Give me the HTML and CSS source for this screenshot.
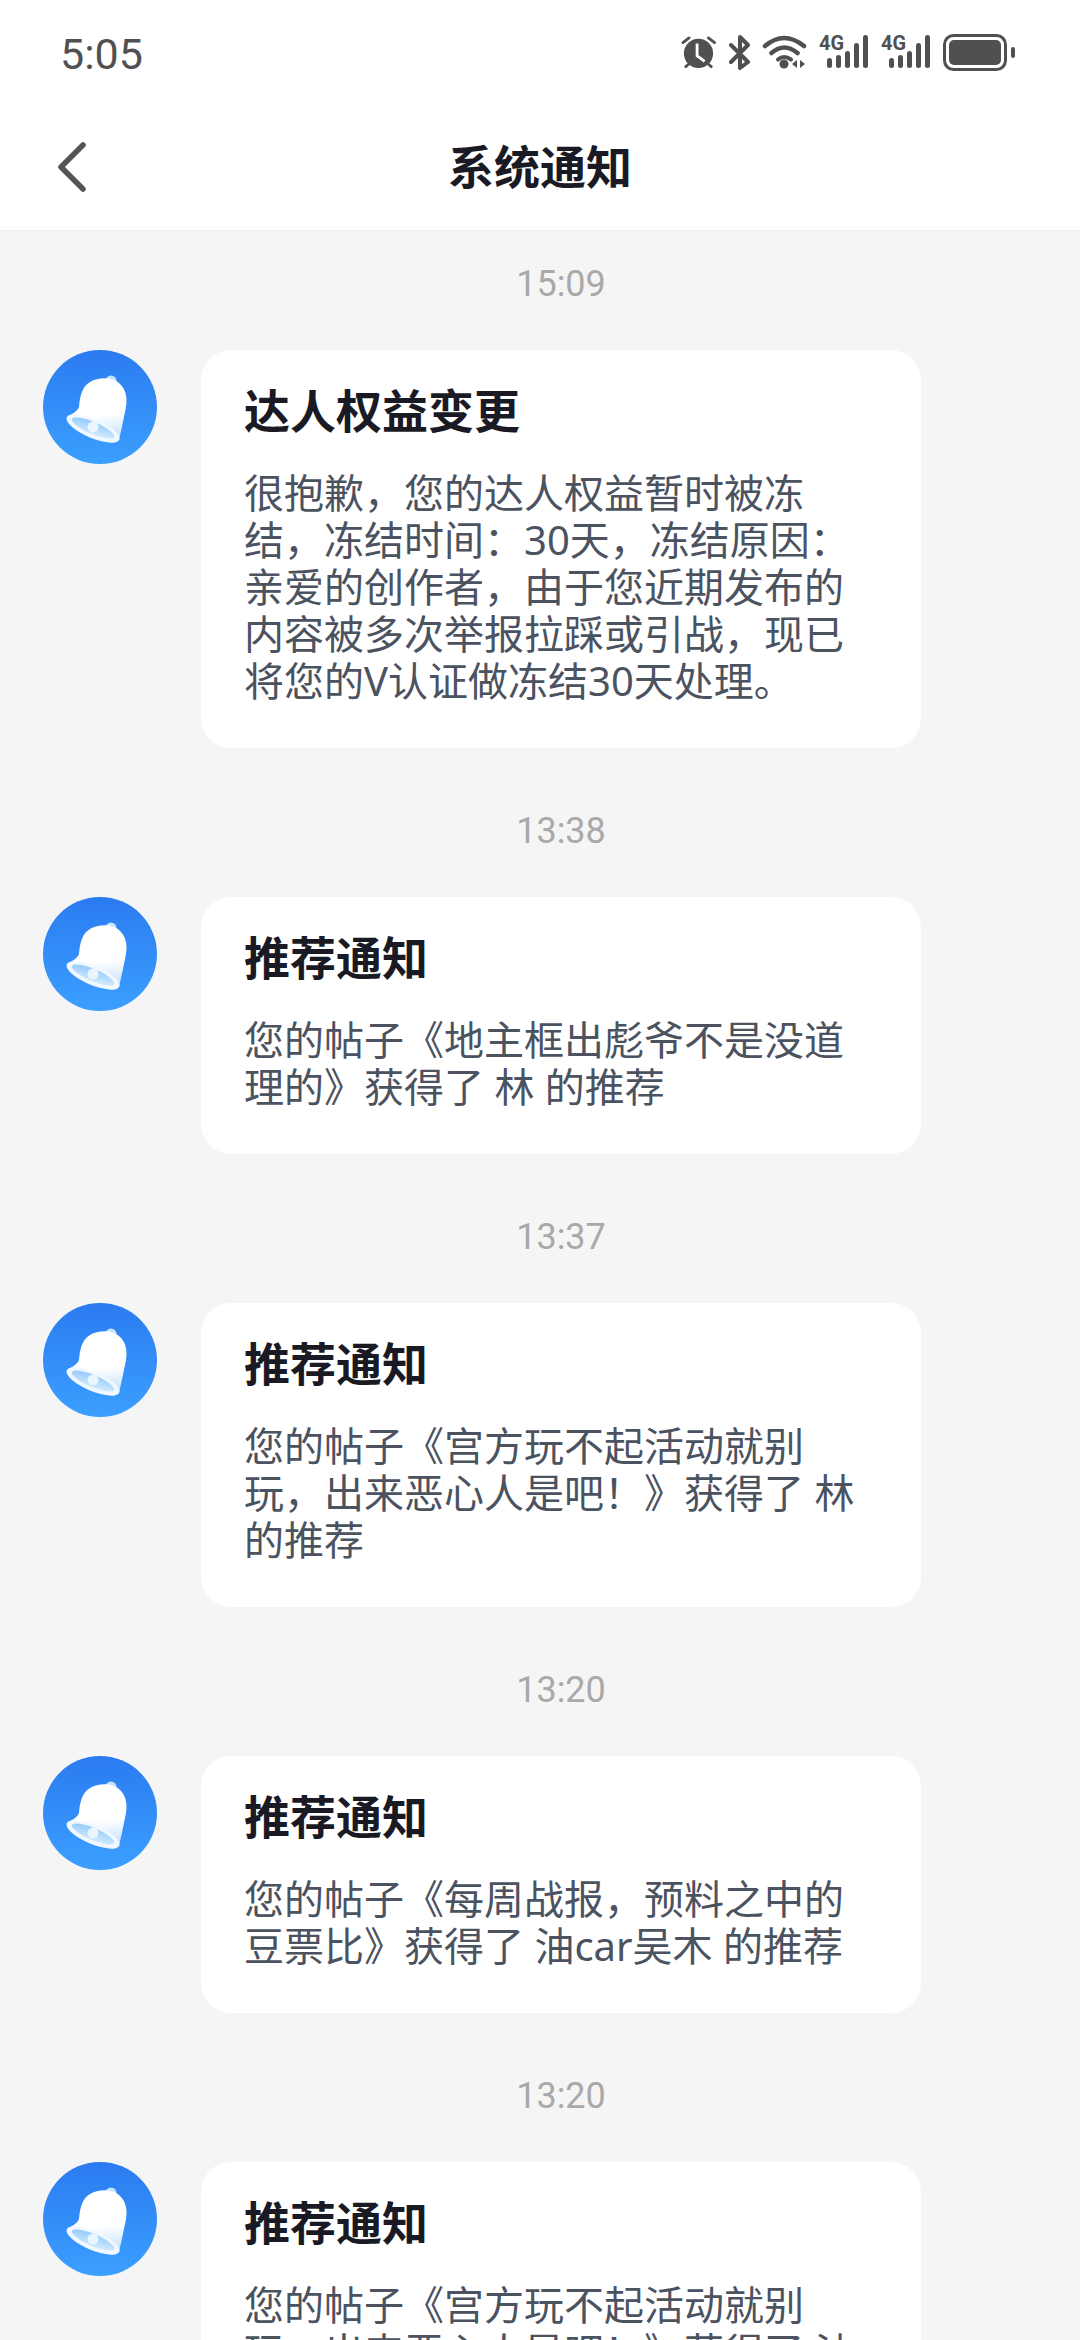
FILE: index.html
```html
<!DOCTYPE html>
<html lang="zh-CN">

<head>
    <meta charset="UTF-8">
    <meta name="viewport" content="width=device-width, initial-scale=1.0">
    <title>系统通知</title>
    <link rel="stylesheet" href="styles.css">
</head>

<body>
    <svg class="defs" width="0" height="0">
        <defs>
            <linearGradient id="bellBody" x1="0.45" y1="0" x2="0.55" y2="1">
                <stop offset="0.6" stop-color="#ffffff" />
                <stop offset="1" stop-color="#c4e0fc" />
            </linearGradient>
            <linearGradient id="bellMouth" x1="0.2" y1="0" x2="0.8" y2="1">
                <stop offset="0" stop-color="#8fc8fa" />
                <stop offset="1" stop-color="#d8ecfe" />
            </linearGradient>
            <symbol id="bell" viewBox="0 0 114 114">
                <circle cx="68" cy="31" r="5.500" fill="#c6e2fb" />
                <path d="M36 57C37 44 40 36 47 32C56 27 69 27 76 33C84 40 85 50 82 62C80 72 78 81 76 90L24 67C29 64 34 62 36 57Z" fill="url(#bellBody)" />
                <ellipse cx="50" cy="78.500" rx="28.500" ry="9.500" transform="rotate(23 50 78.500)" fill="#f1f8ff" />
                <ellipse cx="50" cy="78" rx="23" ry="6" transform="rotate(23 50 78)" fill="url(#bellMouth)" />
                <circle cx="50" cy="77" r="5.500" fill="#eaf5ff" />
            </symbol>
            <symbol id="signal" viewBox="0 0 50 36">
                <text x="0" y="16" class="net-label" textLength="25" lengthAdjust="spacingAndGlyphs">4G</text>
                <rect x="8" y="24" width="5" height="10" rx="2.500" />
                <rect x="17" y="21" width="5" height="13" rx="2.500" />
                <rect x="26" y="17" width="5" height="17" rx="2.500" />
                <rect x="35" y="9" width="5" height="25" rx="2.500" />
                <rect x="44" y="1" width="5" height="33" rx="2.500" />
            </symbol>
        </defs>
    </svg>

    <div class="status-bar">
        <span class="clock">5:05</span>
        <div class="status-icons">
            <svg class="ic-alarm" viewBox="0 0 37 35">
                <circle cx="18.500" cy="18.500" r="15.500" fill="#505050" />
                <path d="M17 8V21L25 27" fill="none" stroke="#fff" stroke-width="3" />
                <path d="M2 7L8.500 2M29 2L35.500 7M5 32.500L8 30M29 30L32 32.500" fill="none" stroke="#505050" stroke-width="3" stroke-linecap="round" />
            </svg>
            <svg class="ic-bt" viewBox="0 0 22 35">
                <path d="M3 10L20 27L12 33V2L20 10L3 27" fill="none" stroke="#505050" stroke-width="4" stroke-linejoin="round" stroke-linecap="round" />
            </svg>
            <svg class="ic-wifi" viewBox="0 0 45 36">
                <path d="M3 12Q22 -4 42 12M9.500 19Q22 8 35.500 19" fill="none" stroke="#505050" stroke-width="4.500" stroke-linecap="round" />
                <path d="M16 25.500Q22 20.500 29 25.500" fill="none" stroke="#505050" stroke-width="4" stroke-linecap="round" />
                <circle cx="22" cy="30" r="4.500" fill="#505050" />
                <path d="M35 26V34L30 30ZM38 26V34L43 30Z" fill="#505050" />
            </svg>
            <svg class="ic-signal"><use href="#signal" /></svg>
            <svg class="ic-signal"><use href="#signal" /></svg>
            <svg class="ic-battery" viewBox="0 0 72 37">
                <rect x="1.500" y="1.500" width="61" height="34" rx="9" fill="none" stroke="#505050" stroke-width="3" />
                <rect x="6" y="6" width="52" height="25" rx="5" fill="#505050" />
                <rect x="68" y="13" width="4" height="11" rx="2" fill="#505050" />
            </svg>
        </div>
    </div>

    <div class="nav-bar">
        <svg class="back" viewBox="0 0 30 50">
            <path d="M26 3L4 25L26 47" fill="none" stroke="#555" stroke-width="5.500" stroke-linecap="round" stroke-linejoin="round" />
        </svg>
        <h1 class="nav-title">系统通知</h1>
    </div>

    <div class="msg-list">
        <div class="msg">
            <div class="msg-time">15:09</div>
            <svg class="avatar"><use href="#bell" /></svg>
            <div class="card">
                <h2 class="card-title">达人权益变更</h2>
                <p class="card-text">很抱歉，您的达人权益暂时被冻结，冻结时间：30天，冻结原因：亲爱的创作者，由于您近期发布的内容被多次举报拉踩或引战，现已将您的V认证做冻结30天处理。</p>
            </div>
        </div>
        <div class="msg">
            <div class="msg-time">13:38</div>
            <svg class="avatar"><use href="#bell" /></svg>
            <div class="card">
                <h2 class="card-title">推荐通知</h2>
                <p class="card-text">您的帖子《地主框出彪爷不是没道理的》获得了 林 的推荐</p>
            </div>
        </div>
        <div class="msg">
            <div class="msg-time">13:37</div>
            <svg class="avatar"><use href="#bell" /></svg>
            <div class="card">
                <h2 class="card-title">推荐通知</h2>
                <p class="card-text">您的帖子《宫方玩不起活动就别玩，出来恶心人是吧！》获得了 林 的推荐</p>
            </div>
        </div>
        <div class="msg">
            <div class="msg-time">13:20</div>
            <svg class="avatar"><use href="#bell" /></svg>
            <div class="card">
                <h2 class="card-title">推荐通知</h2>
                <p class="card-text">您的帖子《每周战报，预料之中的豆票比》获得了 油car吴木 的推荐</p>
            </div>
        </div>
        <div class="msg">
            <div class="msg-time">13:20</div>
            <svg class="avatar"><use href="#bell" /></svg>
            <div class="card">
                <h2 class="card-title">推荐通知</h2>
                <p class="card-text">您的帖子《宫方玩不起活动就别玩，出来恶心人是吧！》获得了 油car吴木 的推荐</p>
            </div>
        </div>
    </div>
</body>

</html>
```

FILE: styles.css
```css
html,
body {
    height: 2340px;
    overflow: hidden;
}

body {
    margin: 0;
    background-color: #f5f5f5;
    font-family: Roboto, "Noto Sans CJK SC", sans-serif;
}

.defs {
    position: absolute;
}

.status-bar {
    height: 104px;
    display: flex;
    align-items: center;
    justify-content: space-between;
    padding: 0 65px 0 60px;
    background-color: #fff;
}

.clock {
    padding-top: 3px;
    font-size: 43px;
    color: #505050;
}

.status-icons {
    display: flex;
    align-items: center;
    gap: 12px;
}

.ic-alarm {
    width: 35px;
    height: 33px;
}

.ic-bt {
    width: 22px;
    height: 35px;
}

.ic-wifi {
    width: 45px;
    height: 36px;
}

.ic-signal {
    width: 50px;
    height: 36px;
    fill: #505050;
}

.net-label {
    font-family: Roboto, sans-serif;
    font-size: 21px;
    font-weight: 700;
}

.ic-battery {
    width: 72px;
    height: 37px;
}

.nav-bar {
    position: relative;
    box-sizing: border-box;
    height: 127px;
    padding-bottom: 6px;
    display: flex;
    align-items: center;
    justify-content: center;
    background-color: #fff;
    border-bottom: 1px solid #f0f0f0;
}

.back {
    position: absolute;
    left: 57px;
    top: 38px;
    width: 30px;
    height: 50px;
}

.nav-title {
    margin: 0;
    font-size: 46px;
    font-weight: 700;
    color: #1a1a24;
}

.msg-list {
    padding-top: 32px;
}

.msg {
    display: grid;
    grid-template-columns: 114px 720px;
    column-gap: 44px;
    row-gap: 47px;
    align-items: start;
    padding-left: 43px;
    margin-bottom: 62px;
}

.msg-time {
    grid-column: 2;
    height: 40px;
    line-height: 42px;
    text-align: center;
    font-size: 36px;
    color: #a9a9a9;
}

.avatar {
    grid-column: 1;
    width: 114px;
    height: 114px;
    border-radius: 50%;
    background: linear-gradient(180deg, #2b7bf0, #3b9fff);
}

.card {
    grid-column: 2;
    padding: 32px 43px 44px;
    background-color: #fff;
    border-radius: 30px;
}

.card-title {
    margin: 0 0 27px;
    line-height: 60px;
    font-size: 46px;
    font-weight: 700;
    color: #1a1a24;
}

.card-text {
    margin: 0;
    line-height: 47px;
    font-size: 40px;
    font-family: "Noto Sans", "Noto Sans CJK SC", sans-serif;
    color: #4b5260;
}
```
